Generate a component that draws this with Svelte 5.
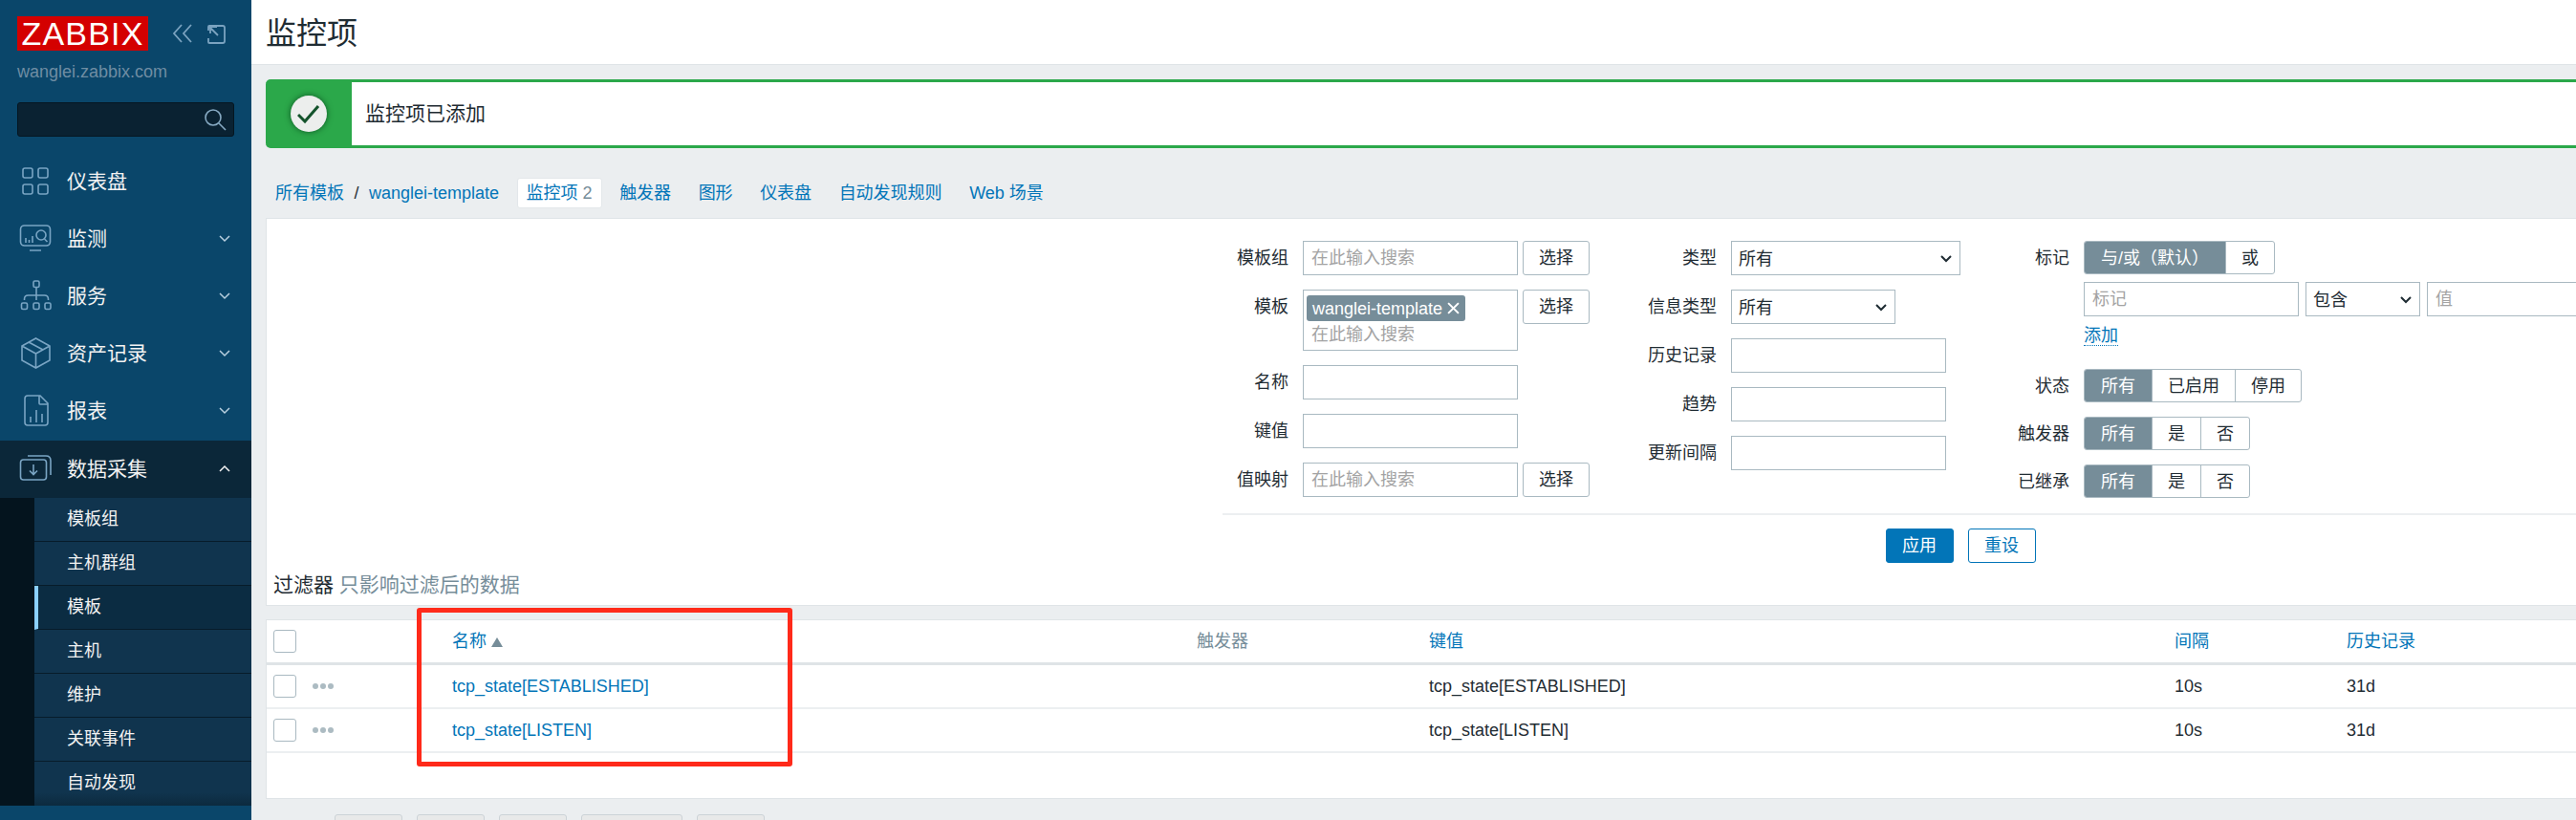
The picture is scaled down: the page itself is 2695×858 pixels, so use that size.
<script>
	const menu = [
		{ label: '仪表盘', icon: 'dash' },
		{ label: '监测', icon: 'monitor', more: true },
		{ label: '服务', icon: 'service', more: true },
		{ label: '资产记录', icon: 'box', more: true },
		{ label: '报表', icon: 'report', more: true }
	];
	const subItems = ['模板组', '主机群组', '模板', '主机', '维护', '关联事件', '自动发现'];
	const tabs = ['触发器', '图形', '仪表盘', '自动发现规则', 'Web 场景'];
	const rows = ['tcp_state[ESTABLISHED]', 'tcp_state[LISTEN]'];
	const pagerButtons = ['w71', 'w71', 'w71', 'w106', 'w71'];
</script>

{#snippet chevron()}
	<svg class="chev" viewBox="0 0 14 10"><path d="M2 2l5 5 5-5" /></svg>
{/snippet}

{#snippet select(text, cls)}
	<div class="select {cls}"><span>{text}</span>{@render chevron()}</div>
{/snippet}

{#snippet seg(items)}
	<div class="seg">
		{#each items as item, i}
			<span class:on={i === 0}>{item}</span>
		{/each}
	</div>
{/snippet}

{#snippet menuIcon(name)}
	<svg class="micon" viewBox="0 0 36 36">
		{#if name === 'dash'}
			<rect x="4" y="4" width="10" height="10" rx="2" />
			<rect x="20" y="4" width="10" height="10" rx="2" />
			<rect x="4" y="21" width="10" height="10" rx="2" />
			<rect x="20" y="21" width="10" height="10" rx="2" />
		{:else if name === 'monitor'}
			<rect x="1.500" y="4" width="31" height="21" rx="4" />
			<path d="M11 30h12M7 17v5M10.500 19v3M14 15v7" />
			<circle cx="23" cy="14" r="5" />
			<path d="M26.500 18l3 3" />
		{:else if name === 'service'}
			<rect x="15" y="2" width="6" height="6.500" rx="1.500" />
			<rect x="2.500" y="25" width="6" height="6.500" rx="1.500" />
			<rect x="15" y="25" width="6" height="6.500" rx="1.500" />
			<rect x="27" y="25" width="6" height="6.500" rx="1.500" />
			<path d="M18 8.500V22M5.500 22v-1q0-4 4-4h17q4 0 4 4v1" />
		{:else if name === 'box'}
			<path d="M17.500 2L32 10v15l-14.500 8L3 25V10zM3 10l14.500 8L32 10M17.500 18v15M10 6l15 8" />
		{:else if name === 'report'}
			<path d="M9 2h13l8 8v20q0 3-3 3H9q-3 0-3-3V5q0-3 3-3zM21 2v8q0 1 1 1h8M12 30v-6M18 30V17M24 30v-9" />
		{:else if name === 'collect'}
			<rect x="1.500" y="8" width="27" height="21" rx="3" />
			<path d="M9 4h19q5 0 5 5v15M15 13v10M11 19.500l4 4 4-4" />
		{:else}
			<circle cx="18" cy="24" r="9" />
		{/if}
	</svg>
{/snippet}

<div class="app">
	<aside class="sidebar">
		<div class="brand">
			<div class="logo">ZABBIX</div>
			<svg class="collapse" viewBox="0 0 60 22">
				<path d="M10 2L2 11l8 9M20 2l-8 9 8 9" />
				<path d="M38 8V4q0-1 1-1h14q2 0 2 2v14q0 2-2 2H39q-1 0-1-1v-4M39 4l9 9M40 11V4h7" />
			</svg>
		</div>
		<div class="host">wanglei.zabbix.com</div>
		<div class="search">
			<svg viewBox="0 0 24 24"><circle cx="10" cy="10" r="8" /><path d="M16 16l7 7" /></svg>
		</div>
		<nav>
			{#each menu as item}
				<div class="item">
					{@render menuIcon(item.icon)}
					<span>{item.label}</span>
					{#if item.more}{@render chevron()}{/if}
				</div>
			{/each}
			<div class="item open">
				{@render menuIcon('collect')}
				<span>数据采集</span>
				<svg class="chev up" viewBox="0 0 14 10"><path d="M2 7l5-5 5 5" /></svg>
			</div>
			<div class="sub">
				{#each subItems as item, i}
					<div class="sub-item" class:current={i === 2}>{item}</div>
				{/each}
			</div>
			<div class="item">
				{@render menuIcon('user')}
			</div>
		</nav>
	</aside>

	<main>
		<header><h1>监控项</h1></header>
		<div class="message">
			<div class="message-icon">
				<div class="tick">
					<svg viewBox="0 0 24 24"><path d="M1 13l7 7L22 4" /></svg>
				</div>
			</div>
			<div class="message-text">监控项已添加</div>
		</div>

		<div class="tabs">
			<div class="crumbs"><a href="#a">所有模板</a><i>/</i><a href="#a">wanglei-template</a></div>
			<div class="tab active"><a href="#a">监控项</a> <em>2</em></div>
			{#each tabs as tab}
				<div class="tab"><a href="#a">{tab}</a></div>
			{/each}
		</div>

		<section class="filter">
			<div class="form">
				<div class="columns">
					<div class="col col1">
						<label>模板组</label>
						<div class="field"><div class="input w225 ph">在此输入搜索</div><button>选择</button></div>
						<label>模板</label>
						<div class="field">
							<div class="input w225 multi">
								<span class="chip">wanglei-template
									<svg viewBox="0 0 12 12"><path d="M1 1l10 10M11 1L1 11" /></svg>
								</span>
								<span class="ph">在此输入搜索</span>
							</div>
							<button>选择</button>
						</div>
						<label>名称</label>
						<div class="field"><div class="input w225"></div></div>
						<label>键值</label>
						<div class="field"><div class="input w225"></div></div>
						<label>值映射</label>
						<div class="field"><div class="input w225 ph">在此输入搜索</div><button>选择</button></div>
					</div>

					<div class="col col2">
						<label>类型</label>
						<div class="field">{@render select('所有', 'w240')}</div>
						<label>信息类型</label>
						<div class="field">{@render select('所有', 'w172')}</div>
						<label>历史记录</label>
						<div class="field"><div class="input w225"></div></div>
						<label>趋势</label>
						<div class="field"><div class="input w225"></div></div>
						<label>更新间隔</label>
						<div class="field"><div class="input w225"></div></div>
					</div>

					<div class="col col3">
						<label>标记</label>
						<div class="tag-cell">
							<div class="seg tagmode"><span class="on">与/或（默认）</span><span>或</span></div>
							<div class="tag-row">
								<div class="input w225 ph">标记</div>
								{@render select('包含', 'w119')}
								<div class="input w225 ph">值</div>
							</div>
							<a class="add" href="#a">添加</a>
						</div>
						<label>状态</label>
						{@render seg(['所有', '已启用', '停用'])}
						<label>触发器</label>
						{@render seg(['所有', '是', '否'])}
						<label>已继承</label>
						{@render seg(['所有', '是', '否'])}
					</div>
				</div>
				<div class="actions">
					<button class="apply">应用</button>
					<button class="reset">重设</button>
				</div>
			</div>
			<div class="filter-note">过滤器 <span>只影响过滤后的数据</span></div>
		</section>

		<section class="list">
			<table>
				<colgroup>
					<col class="c-check" /><col class="c-dots" /><col class="c-name" /><col class="c-trig" />
					<col class="c-key" /><col class="c-int" /><col class="c-hist" />
				</colgroup>
				<thead>
					<tr>
						<th><div class="box"></div></th>
						<th></th>
						<th><a href="#a">名称</a><b class="sort"></b></th>
						<th class="muted">触发器</th>
						<th><a href="#a">键值</a></th>
						<th><a href="#a">间隔</a></th>
						<th><a href="#a">历史记录</a></th>
					</tr>
				</thead>
				<tbody>
					{#each rows as row}
						<tr>
							<td><div class="box"></div></td>
							<td><div class="dots"><i></i><i></i><i></i></div></td>
							<td><a href="#a">{row}</a></td>
							<td></td>
							<td>{row}</td>
							<td>10s</td>
							<td>31d</td>
						</tr>
					{/each}
				</tbody>
			</table>
		</section>

		<div class="pager">
			{#each pagerButtons as cls}
				<div class="pager-btn {cls}"></div>
			{/each}
		</div>
	</main>

	<div class="callout"></div>
</div>

<style>
	:global(body) {
		margin: 0;
		background: #ebeef0;
	}

	.app {
		position: relative;
		display: flex;
		width: 2695px;
		height: 858px;
		overflow: hidden;
		font: 18px/22px 'Liberation Sans', 'Noto Sans CJK SC', sans-serif;
		color: #1f2c33;
	}

	a {
		color: #0275b8;
		text-decoration: none;
	}

	/* sidebar */
	.sidebar {
		flex: 0 0 263px;
		height: 858px;
		overflow: hidden;
		background: #0a466a;
		color: #f2f2f2;
	}

	.brand {
		display: flex;
		align-items: center;
		padding: 17px 0 0 18px;
	}

	.logo {
		width: 137px;
		height: 36px;
		background: #d40000;
		color: #fff;
		font-size: 34px;
		line-height: 37px;
		letter-spacing: 1.2px;
		text-align: center;
	}

	.collapse {
		width: 60px;
		height: 22px;
		margin-left: 25px;
		fill: none;
		stroke: #7ba3c0;
		stroke-width: 1.8;
	}

	.host {
		margin: 11px 0 0 18px;
		color: #6f8da3;
	}

	.search {
		display: flex;
		justify-content: flex-end;
		align-items: center;
		box-sizing: border-box;
		width: 227px;
		height: 36px;
		margin: 21px 0 0 18px;
		padding-right: 7px;
		background: #0a2232;
		border: 1px solid #051621;
		border-radius: 3px;
	}

	.search svg {
		width: 24px;
		height: 24px;
		fill: none;
		stroke: #86a9c2;
		stroke-width: 1.6;
	}

	nav {
		margin-top: 17px;
	}

	.item {
		display: flex;
		align-items: center;
		height: 60px;
		padding-left: 20px;
		font-size: 21px;
	}

	.item > span {
		margin-left: 14px;
		flex: 1;
	}

	.item.open {
		background: #0b2739;
		margin-top: 1px;
	}

	.micon {
		flex: 0 0 36px;
		width: 36px;
		height: 36px;
		fill: none;
		stroke: #7aa5c4;
		stroke-width: 1.6;
	}

	.chev {
		width: 14px;
		height: 10px;
		margin-right: 21px;
		fill: none;
		stroke: #b8cfdf;
		stroke-width: 1.5;
	}

	.chev.up {
		stroke: #f2f2f2;
	}

	.sub {
		padding-left: 36px;
		background: #04141e;
	}

	.sub-item {
		box-sizing: border-box;
		height: 46px;
		padding: 11px 0 0 34px;
		background: #10344e;
		border-bottom: 1px solid #071c2a;
	}

	.sub-item:last-child {
		background: linear-gradient(#10344e 70%, #0c2a3e);
		border-bottom: 0;
	}

	.sub-item.current {
		padding-left: 30px;
		background: #0b2c42;
		border-left: 4px solid #8ad0ff;
	}

	/* main column */
	main {
		flex: 1;
		min-width: 0;
	}

	header {
		box-sizing: border-box;
		height: 68px;
		padding: 16px 0 0 15px;
		background: #fff;
		border-bottom: 1px solid #dfe4e7;
	}

	h1 {
		margin: 0;
		font-size: 32px;
		line-height: 38px;
		font-weight: 400;
	}

	.message {
		display: flex;
		box-sizing: border-box;
		width: 2500px;
		height: 72px;
		margin: 15px 0 0 15px;
		background: #2ba84a;
		border: 3px solid #2ba84a;
		border-left: 0;
		border-radius: 5px 0 0 5px;
	}

	.message-icon {
		display: flex;
		justify-content: center;
		align-items: center;
		flex: 0 0 90px;
	}

	.tick {
		width: 38px;
		height: 38px;
		border-radius: 50%;
		background: #eceeed;
		box-shadow: 0 0 6px rgba(0, 50, 20, 0.7);
	}

	.tick svg {
		display: block;
		fill: none;
		stroke: #14532c;
		stroke-width: 3;
		margin: 7px;
		width: 24px;
		height: 24px;
	}

	.message-text {
		flex: 1;
		padding: 20px 14px;
		background: #fff;
		font-size: 21px;
		line-height: 26px;
	}

	.tabs {
		display: flex;
		align-items: center;
		gap: 8.500px;
		height: 32px;
		margin: 31px 0 10px 15px;
	}

	.crumbs,
	.tab {
		padding: 0 10px;
	}

	.crumbs i {
		margin: 0 10.500px;
		font-style: normal;
		color: #1f2c33;
	}

	.tab {
		white-space: nowrap;
	}

	.tab.active {
		box-sizing: border-box;
		height: 32px;
		padding: 4px 9px;
		background: #fff;
		border: 1px solid #e3e7ea;
		border-radius: 3px;
	}

	.tab em {
		font-style: normal;
		color: #768d99;
	}

	.filter {
		box-sizing: border-box;
		width: 2500px;
		height: 406px;
		margin-left: 15px;
		background: #fff;
		border: 1px solid #dfe4e7;
		position: relative;
	}

	.form {
		width: 1544px;
		margin-left: 1000px;
		padding-top: 23px;
	}

	.columns {
		display: flex;
		padding-bottom: 16px;
		border-bottom: 2px solid #eceff1;
	}

	.col {
		display: grid;
		grid-auto-rows: min-content;
		row-gap: 15px;
		column-gap: 15px;
		align-items: start;
	}

	.col1 {
		grid-template-columns: 69px 300px;
	}

	.col2 {
		grid-template-columns: 133px 240px;
	}

	.col3 {
		grid-template-columns: 114px auto;
	}

	label {
		display: block;
		line-height: 36px;
		text-align: right;
		white-space: nowrap;
	}

	.col3 label {
		height: 35px;
	}

	.field {
		display: flex;
		align-items: flex-start;
		gap: 5px;
	}

	.input,
	.select,
	button {
		box-sizing: border-box;
		height: 36px;
		background: #fff;
		border: 1px solid #a9b9c1;
		font: inherit;
		color: inherit;
	}

	.input {
		padding: 6px 8px;
		flex: none;
	}

	.ph,
	.input.ph {
		color: #a3a3a3;
	}

	.w225 {
		width: 225px;
	}

	.multi {
		height: 64px;
		padding: 5px 3px;
	}

	.multi .ph {
		display: block;
		padding: 3px 5px 0;
	}

	.chip {
		display: inline-flex;
		align-items: center;
		gap: 5px;
		height: 27px;
		padding: 0 6px;
		background: #768d99;
		border-radius: 3px;
		color: #fff;
	}

	.chip svg {
		width: 13px;
		height: 13px;
		fill: none;
		stroke: #fff;
		stroke-width: 1.800;
	}

	button {
		width: 70px;
		border-radius: 3px;
		padding: 0;
	}

	.select {
		display: flex;
		align-items: center;
		justify-content: space-between;
		padding: 1px 7px 0;
		flex: none;
	}

	.select .chev {
		margin: 0;
		stroke: #1f2c33;
		stroke-width: 2;
	}

	.w240 {
		width: 240px;
	}

	.w172 {
		width: 172px;
	}

	.w119 {
		width: 120px;
	}

	.seg {
		display: flex;
		width: max-content;
		height: 35px;
		box-sizing: border-box;
		background: #fff;
		border: 1px solid #a9b9c1;
		border-radius: 3px;
		overflow: hidden;
	}

	.seg span {
		padding: 0 16px;
		line-height: 34px;
		border-left: 1px solid #a9b9c1;
	}

	.seg span:first-child {
		padding: 0 17px;
		border-left: 0;
	}

	.seg .on {
		background: #768d99;
		color: #fff;
	}

	.tag-cell {
		height: 119px;
	}

	.tag-row {
		display: flex;
		gap: 7px;
		margin-top: 8px;
		width: 600px;
	}

	.add {
		display: inline-block;
		margin-top: 10px;
		line-height: 20px;
		border-bottom: 1px dotted #0275b8;
	}

	.actions {
		display: flex;
		justify-content: center;
		gap: 15px;
		padding-top: 14px;
	}

	.actions button {
		width: 71px;
	}

	.apply {
		background: #0275b8;
		border-color: #0275b8;
		color: #fff;
	}

	.reset {
		border-color: #0275b8;
		color: #0275b8;
	}

	.filter-note {
		position: absolute;
		left: 7px;
		bottom: 9px;
		font-size: 21px;
		line-height: 24px;
	}

	.filter-note span {
		color: #768d99;
	}

	.list {
		box-sizing: border-box;
		width: 2500px;
		height: 188px;
		margin: 14px 0 0 15px;
		background: #fff;
		border: 1px solid #dfe4e7;
	}

	table {
		width: 2499px;
		table-layout: fixed;
		border-collapse: collapse;
	}

	.c-check { width: 48px; }
	.c-dots { width: 146px; }
	.c-name { width: 779px; }
	.c-trig { width: 243px; }
	.c-key { width: 780px; }
	.c-int { width: 180px; }

	th,
	td {
		height: 44px;
		padding: 0;
		text-align: left;
		font-weight: 400;
		border-bottom: 2px solid #eceff1;
	}

	th {
		border-bottom: 3px solid #dfe4e7;
	}

	th:first-child,
	td:first-child {
		padding-left: 7px;
	}

	.muted {
		color: #768d99;
	}

	.sort {
		display: inline-block;
		margin-left: 5px;
		border: 6px solid transparent;
		border-top: 0;
		border-bottom: 10px solid #768d99;
	}

	.box {
		box-sizing: border-box;
		width: 24px;
		height: 24px;
		border: 1px solid #a9b9c1;
		border-radius: 3px;
	}

	.dots {
		display: flex;
		gap: 2px;
	}

	.dots i {
		width: 6px;
		height: 6px;
		border-radius: 50%;
		background: #acbbc2;
	}

	.pager {
		display: flex;
		gap: 15px;
		margin: 16px 0 0 87px;
	}

	.pager-btn {
		box-sizing: border-box;
		height: 24px;
		background: #e8e9e9;
		border: 1px solid #ccd3d7;
		border-radius: 3px;
	}

	.w71 {
		width: 71px;
	}

	.w106 {
		width: 106px;
	}

	/* red annotation drawn over the screenshot */
	.callout {
		position: absolute;
		left: 436px;
		top: 636px;
		width: 393px;
		height: 166px;
		box-sizing: border-box;
		border: 5px solid #ff2a1a;
		border-radius: 3px;
	}
</style>
